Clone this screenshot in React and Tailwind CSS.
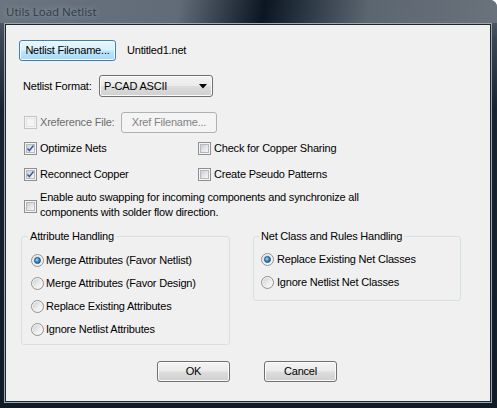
import React from "react";

const Check = ({ checked, disabled }) => (
  <span
    className={`relative flex h-[13px] w-[13px] shrink-0 items-center justify-center border ${
      disabled ? "border-[#c4c4c4] bg-[#f4f4f4]" : "border-[#8e8f8f] bg-[#f4f4f4]"
    }`}
  >
    <span
      className={`block h-[9px] w-[9px] border ${
        disabled
          ? "border-[#e4e4e4] bg-[#f4f4f4]"
          : "border-[#b6babf] bg-[linear-gradient(135deg,#c9ced4_0%,#e4e6e8_55%,#f6f6f6_100%)]"
      }`}
    />
    {checked && (
      <svg className="absolute left-[1px] top-[1px]" width="9" height="9" viewBox="0 0 9 9">
        <path d="M1.4 4.4 L3.4 6.5 L7.5 1.5" fill="none" stroke="#3d5f96" strokeWidth="1.5" />
      </svg>
    )}
  </span>
);

const Radio = ({ checked }) => (
  <span className="flex h-[13px] w-[13px] shrink-0 items-center justify-center rounded-full border border-[#929292] bg-[#f2f2f2]">
    <span className="flex h-[9px] w-[9px] items-center justify-center rounded-full bg-[linear-gradient(135deg,#cdd0d3_0%,#eeeeee_60%,#fbfbfb_100%)]">
      {checked && (
        <span className="block h-[7px] w-[7px] rounded-full border border-[#1d4f7d] bg-[radial-gradient(circle_at_35%_35%,#a9e2fb_0%,#3b8fcf_45%,#174f86_100%)]" />
      )}
    </span>
  </span>
);

const grayBtn =
  "flex items-center justify-center rounded-[3px] border border-[#707070] bg-[linear-gradient(180deg,#f3f3f3_0%,#ebebeb_48%,#dddddd_52%,#cfcfcf_100%)] shadow-[inset_0_0_0_1px_#fafafa]";

export default function App() {
  return (
    <div className="flex h-[408px] w-[497px] flex-col overflow-hidden rounded-tr-[7px] bg-[linear-gradient(180deg,#5f6a75_0px,#3a4552_40px,#172330_110px,#101b27_100%)] font-['Liberation_Sans',Arial,sans-serif] text-[11px] tracking-[-0.2px] text-black">
      {/* title bar */}
      <div className="flex h-[23px] shrink-0 items-center bg-[linear-gradient(100deg,#6b7581_0%,#606b77_36%,#0b1622_53%,#2e3946_62%,#5c6671_74%,#6a727b_100%)] pl-[6px]">
        <span className="font-['Open_Sans',sans-serif] text-[11.5px] tracking-[0px] text-[#2f3b47] [text-shadow:0_0_6px_rgba(210,220,230,0.55)]">
          Utils Load Netlist
        </span>
      </div>

      {/* body frame */}
      <div className="flex min-h-0 flex-1 pb-[5px] pl-[4px] pr-[5px]">
        <div className="flex flex-1 border border-[#9ea6ae]">
          <div className="flex flex-1 flex-col border border-[#1c2631] bg-[#f0f0f0]">
            {/* row 1 */}
            <div className="mt-[15px] flex h-[21px] items-center pl-[13px]">
              <div className="flex h-[21px] w-[97px] items-center justify-center rounded-[3px] border border-[#3c7fb1] bg-[linear-gradient(180deg,#eaf6fd_0%,#d9f0fc_48%,#bee6fd_52%,#a7d9f5_100%)] shadow-[inset_0_0_0_1px_#f4fbff]">
                Netlist Filename...
              </div>
              <span className="ml-[11px]">Untitled1.net</span>
            </div>

            {/* row 2 */}
            <div className="mt-[14px] flex h-[22px] items-center pl-[17px]">
              <span className="w-[76px]">Netlist Format:</span>
              <div className={`${grayBtn} h-[22px] w-[114px] !justify-between pl-[4px] pr-[5px]`}>
                <span>P-CAD ASCII</span>
                <svg width="8" height="5" viewBox="0 0 8 5">
                  <path d="M0 0 H8 L4 4.5 Z" fill="#000" />
                </svg>
              </div>
            </div>

            {/* row 3 */}
            <div className="mt-[15px] flex h-[21px] items-center pl-[18px]">
              <Check disabled />
              <span className="ml-[3px] w-[81px] text-[#6d6d6d]">Xreference File:</span>
              <div className="flex h-[21px] w-[96px] items-center justify-center rounded-[3px] border border-[#adb2b5] bg-[#f4f4f4] text-[#838383]">
                Xref Filename...
              </div>
            </div>

            {/* row 4 */}
            <div className="mt-[9px] flex h-[13px] items-center pl-[18px]">
              <div className="flex w-[174px] items-center">
                <Check checked />
                <span className="ml-[3px]">Optimize Nets</span>
              </div>
              <div className="flex items-center">
                <Check />
                <span className="ml-[3px]">Check for Copper Sharing</span>
              </div>
            </div>

            {/* row 5 */}
            <div className="mt-[13px] flex h-[13px] items-center pl-[18px]">
              <div className="flex w-[174px] items-center">
                <Check checked />
                <span className="ml-[3px]">Reconnect Copper</span>
              </div>
              <div className="flex items-center">
                <Check />
                <span className="ml-[3px]">Create Pseudo Patterns</span>
              </div>
            </div>

            {/* row 6 */}
            <div className="mt-[9px] flex h-[30px] items-start pl-[18px]">
              <span className="mt-[10px]">
                <Check />
              </span>
              <span className="ml-[3px] leading-[15px]">
                Enable auto swapping for incoming components and synchronize all
                <br />
                components with solder flow direction.
              </span>
            </div>

            {/* group boxes */}
            <div className="mt-[10px] flex items-start pl-[15px]">
              <fieldset className="w-[209px] rounded-[3px] border border-[#d5dfe5] pb-[3px] pl-[9px]">
                <legend className="ml-[-3px] px-[2px] leading-[13px]">Attribute Handling</legend>
                <div className="pt-[6px]">
                  {[
                    ["Merge Attributes (Favor Netlist)", true],
                    ["Merge Attributes (Favor Design)", false],
                    ["Replace Existing Attributes", false],
                    ["Ignore Netlist Attributes", false],
                  ].map(([t, c]) => (
                    <div key={t} className="flex h-[23px] items-center">
                      <Radio checked={c} />
                      <span className="ml-[2px]">{t}</span>
                    </div>
                  ))}
                </div>
              </fieldset>

              <fieldset className="ml-[23px] w-[208px] rounded-[3px] border border-[#d5dfe5] pb-[6px] pl-[7px]">
                <legend className="ml-[-2px] px-[2px] leading-[13px]">Net Class and Rules Handling</legend>
                <div className="pt-[5px]">
                  {[
                    ["Replace Existing Net Classes", true],
                    ["Ignore Netlist Net Classes", false],
                  ].map(([t, c]) => (
                    <div key={t} className="flex h-[23px] items-center">
                      <Radio checked={c} />
                      <span className="ml-[3px]">{t}</span>
                    </div>
                  ))}
                </div>
              </fieldset>
            </div>

            {/* buttons */}
            <div className="mt-[16px] flex justify-center gap-[34px] pr-[2px]">
              <div className={`${grayBtn} h-[21px] w-[73px]`}>OK</div>
              <div className={`${grayBtn} h-[21px] w-[73px]`}>Cancel</div>
            </div>
          </div>
        </div>
      </div>
    </div>
  );
}
